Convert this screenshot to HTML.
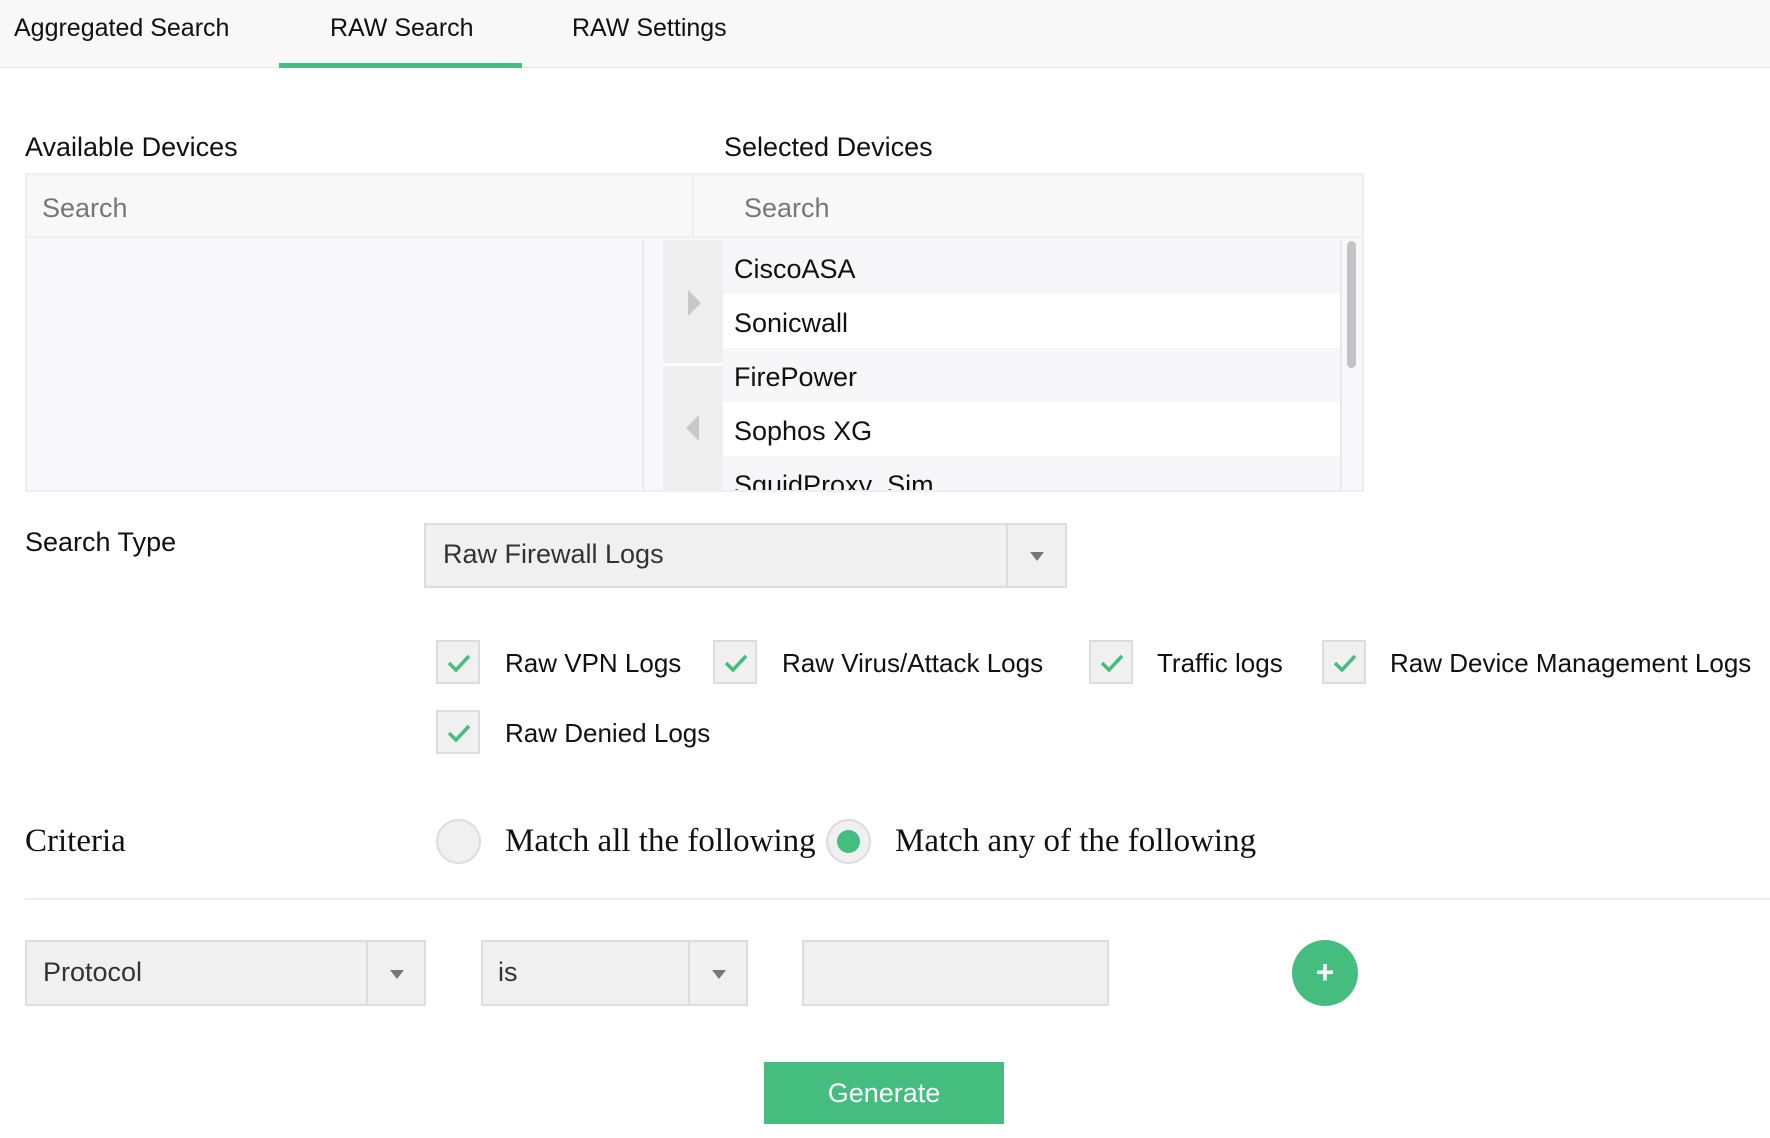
<!DOCTYPE html>
<html><head><meta charset="utf-8"><style>
*{box-sizing:border-box;margin:0;padding:0}
body{width:1770px;height:1138px;background:#fff;font-family:"Liberation Sans",sans-serif;color:#111;position:relative;overflow:hidden}
.a{position:absolute;white-space:nowrap}
.t{font-size:26px;line-height:1}
.tab{font-size:25px;top:14px}
.sel{position:absolute;background:#f0f0f0;border:2px solid #ddd}
.sel .d{position:absolute;top:0;bottom:0;border-left:2px solid #ddd}
.arr{position:absolute;width:0;height:0;border-left:7px solid transparent;border-right:7px solid transparent;border-top:9px solid #777}
.cb{position:absolute;width:44px;height:44px;background:#f0f0f0;border:2px solid #ddd}
.cb svg{position:absolute;left:9px;top:10px}
.row{position:absolute;left:723px;width:617px;height:54px;font-size:27px;padding:14px 0 0 11px}
.serif{font-family:"Liberation Serif",serif;font-size:33px}
</style></head><body>
<div class="a" style="left:0;top:0;width:1770px;height:68px;background:#f8f8f8;border-bottom:1px solid #e6e6e6"></div>
<div class="a tab" style="left:14px">Aggregated Search</div>
<div class="a tab" style="left:330px">RAW Search</div>
<div class="a tab" style="left:572px">RAW Settings</div>
<div class="a" style="left:279px;top:63px;width:243px;height:5px;background:#45bd7f"></div>

<div class="a" style="left:25px;top:132px;font-size:27px">Available Devices</div>
<div class="a" style="left:724px;top:132px;font-size:27px">Selected Devices</div>

<div class="a" style="left:25px;top:173px;width:1339px;height:319px;border:2px solid #eee;background:#f8f8fa"></div>
<div class="a" style="left:27px;top:175px;width:1335px;height:63px;border-bottom:2px solid #eee;background:#f8f8f8"></div>
<div class="a" style="left:692px;top:175px;width:2px;height:63px;background:#eee"></div>
<div class="a" style="left:42px;top:193px;font-size:27px;color:#777">Search</div>
<div class="a" style="left:744px;top:193px;font-size:27px;color:#777">Search</div>
<div class="a" style="left:642px;top:240px;width:2px;height:250px;background:#e8e8e8"></div>
<div class="a" style="left:663px;top:240px;width:60px;height:250px;background:#efefef"></div>
<div class="a" style="left:663px;top:363px;width:60px;height:3px;background:#fff"></div>
<div class="a" style="left:688px;top:290px;width:0;height:0;border-top:13px solid transparent;border-bottom:13px solid transparent;border-left:13px solid #c8c8c8"></div>
<div class="a" style="left:686px;top:415px;width:0;height:0;border-top:13px solid transparent;border-bottom:13px solid transparent;border-right:13px solid #c8c8c8"></div>
<div style="position:absolute;left:0;top:0;width:1770px;height:490px;overflow:hidden">
<div class="row" style="top:240px;background:#f7f7f9">CiscoASA</div>
<div class="row" style="top:294px;background:#fff">Sonicwall</div>
<div class="row" style="top:348px;background:#f7f7f9">FirePower</div>
<div class="row" style="top:402px;background:#fff">Sophos XG</div>
<div class="row" style="top:456px;background:#f7f7f9">SquidProxy_Sim</div>
</div>
<div class="a" style="left:1340px;top:240px;width:2px;height:250px;background:#e8e8e8"></div>
<div class="a" style="left:1347px;top:241px;width:9px;height:127px;border-radius:5px;background:#c3c3c3"></div>

<div class="a" style="left:25px;top:527px;font-size:27px">Search Type</div>
<div class="sel" style="left:424px;top:523px;width:643px;height:65px"><div class="d" style="left:580px"></div><div class="arr" style="left:604px;top:27px"></div></div>
<div class="a" style="left:443px;top:539px;font-size:27px;color:#333">Raw Firewall Logs</div>

<div class="cb" style="left:436px;top:640px"><svg width="24" height="22" viewBox="0 0 24 22"><path d="M2 11l7 7L22 4" stroke="#45bd7f" stroke-width="3.5" fill="none"/></svg></div>
<div class="a t" style="left:505px;top:650px">Raw VPN Logs</div>
<div class="cb" style="left:713px;top:640px"><svg width="24" height="22" viewBox="0 0 24 22"><path d="M2 11l7 7L22 4" stroke="#45bd7f" stroke-width="3.5" fill="none"/></svg></div>
<div class="a t" style="left:782px;top:650px">Raw Virus/Attack Logs</div>
<div class="cb" style="left:1089px;top:640px"><svg width="24" height="22" viewBox="0 0 24 22"><path d="M2 11l7 7L22 4" stroke="#45bd7f" stroke-width="3.5" fill="none"/></svg></div>
<div class="a t" style="left:1157px;top:650px">Traffic logs</div>
<div class="cb" style="left:1322px;top:640px"><svg width="24" height="22" viewBox="0 0 24 22"><path d="M2 11l7 7L22 4" stroke="#45bd7f" stroke-width="3.5" fill="none"/></svg></div>
<div class="a t" style="left:1390px;top:650px">Raw Device Management Logs</div>
<div class="cb" style="left:436px;top:710px"><svg width="24" height="22" viewBox="0 0 24 22"><path d="M2 11l7 7L22 4" stroke="#45bd7f" stroke-width="3.5" fill="none"/></svg></div>
<div class="a t" style="left:505px;top:720px">Raw Denied Logs</div>

<div class="a serif" style="left:25px;top:823px">Criteria</div>
<div class="a" style="left:436px;top:819px;width:45px;height:45px;border-radius:50%;background:#f0f0f0;border:2px solid #ddd"></div>
<div class="a serif" style="left:505px;top:823px">Match all the following</div>
<div class="a" style="left:826px;top:819px;width:45px;height:45px;border-radius:50%;background:#f0f0f0;border:2px solid #ddd"></div>
<div class="a" style="left:837px;top:830px;width:23px;height:23px;border-radius:50%;background:#45bd7f"></div>
<div class="a serif" style="left:895px;top:823px">Match any of the following</div>
<div class="a" style="left:25px;top:898px;width:1745px;height:2px;background:#eee"></div>

<div class="sel" style="left:25px;top:940px;width:401px;height:66px"><div class="d" style="left:339px"></div><div class="arr" style="left:363px;top:28px"></div></div>
<div class="a" style="left:43px;top:957px;font-size:27px;color:#333">Protocol</div>
<div class="sel" style="left:481px;top:940px;width:267px;height:66px"><div class="d" style="left:205px"></div><div class="arr" style="left:229px;top:28px"></div></div>
<div class="a" style="left:498px;top:957px;font-size:27px;color:#333">is</div>
<div class="sel" style="left:802px;top:940px;width:307px;height:66px"></div>
<div class="a" style="left:1292px;top:940px;width:66px;height:66px;border-radius:50%;background:#45bd7f;color:#fff;font-size:32px;font-weight:bold;text-align:center;line-height:64px">+</div>

<div class="a" style="left:764px;top:1062px;width:240px;height:62px;background:#45bd7f;color:#fff;font-size:27px;text-align:center;line-height:62px">Generate</div>
</body></html>
